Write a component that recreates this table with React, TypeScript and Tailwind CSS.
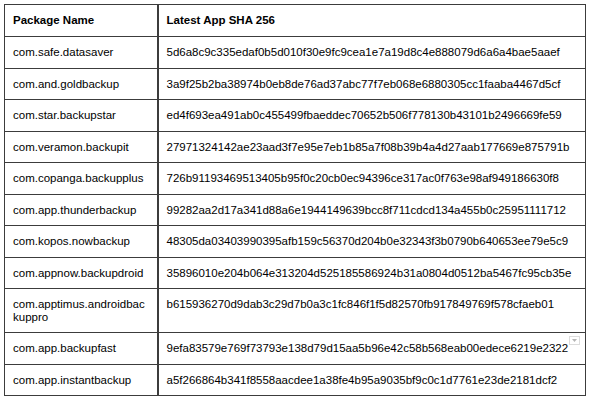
import React from 'react';

type Row = { pkg: string; sha: string; menu?: boolean };

const rows: Row[] = [
  { pkg: 'com.safe.datasaver', sha: '5d6a8c9c335edaf0b5d010f30e9fc9cea1e7a19d8c4e888079d6a6a4bae5aaef' },
  { pkg: 'com.and.goldbackup', sha: '3a9f25b2ba38974b0eb8de76ad37abc77f7eb068e6880305cc1faaba4467d5cf' },
  { pkg: 'com.star.backupstar', sha: 'ed4f693ea491ab0c455499fbaeddec70652b506f778130b43101b2496669fe59' },
  { pkg: 'com.veramon.backupit', sha: '27971324142ae23aad3f7e95e7eb1b85a7f08b39b4a4d27aab177669e875791b' },
  { pkg: 'com.copanga.backupplus', sha: '726b91193469513405b95f0c20cb0ec94396ce317ac0f763e98af949186630f8' },
  { pkg: 'com.app.thunderbackup', sha: '99282aa2d17a341d88a6e1944149639bcc8f711cdcd134a455b0c25951111712' },
  { pkg: 'com.kopos.nowbackup', sha: '48305da03403990395afb159c56370d204b0e32343f3b0790b640653ee79e5c9' },
  { pkg: 'com.appnow.backupdroid', sha: '35896010e204b064e313204d525185586924b31a0804d0512ba5467fc95cb35e' },
  { pkg: 'com.apptimus.androidbackuppro', sha: 'b615936270d9dab3c29d7b0a3c1fc846f1f5d82570fb917849769f578cfaeb01' },
  { pkg: 'com.app.backupfast', sha: '9efa83579e769f73793e138d79d15aa5b96e42c58b568eab00edece6219e2322', menu: true },
  { pkg: 'com.app.instantbackup', sha: 'a5f266864b341f8558aacdee1a38fe4b95a9035bf9c0c1d7761e23de2181dcf2' },
];

const App: React.FC = () => {
  return (
    <div
      className="w-[590px] h-[403px] bg-white p-[4px] text-black text-[11.5px] leading-[13px]"
      style={{ fontFamily: '"Liberation Sans", Arial, sans-serif' }}
    >
      <table className="w-[582px] border-collapse table-fixed border-[1.5px] border-[#3c3c3c]">
        <colgroup>
          <col className="w-[153px]" />
          <col />
        </colgroup>
        <thead>
          <tr className="h-[32px]">
            <th className="border-[1px] border-r-[2px] border-[#3c3c3c] px-2 pt-[9px] pb-[8px] text-left align-top font-bold">
              Package Name
            </th>
            <th className="border-[1px] border-[#3c3c3c] px-2 pt-[9px] pb-[8px] text-left align-top font-bold">
              Latest App SHA 256
            </th>
          </tr>
        </thead>
        <tbody>
          {rows.map((r) => (
            <tr key={r.pkg} className="h-[31.5px]">
              <td className="border-[1px] border-r-[2px] border-[#3c3c3c] px-2 pt-[9px] pb-[8px] align-top break-all">
                {r.pkg}
              </td>
              <td className="relative border-[1px] border-[#3c3c3c] px-2 pt-[9px] pb-[8px] align-top whitespace-nowrap">
                {r.sha}
                {r.menu && (
                  <span className="absolute right-[5px] top-[3px] flex h-[9px] w-[11px] items-center justify-center border border-[#dcdcdc] bg-white">
                    <svg width="5" height="3" viewBox="0 0 5 3">
                      <path d="M0 0h5L2.5 3z" fill="#b5b5b5" />
                    </svg>
                  </span>
                )}
              </td>
            </tr>
          ))}
        </tbody>
      </table>
    </div>
  );
};

export default App;
